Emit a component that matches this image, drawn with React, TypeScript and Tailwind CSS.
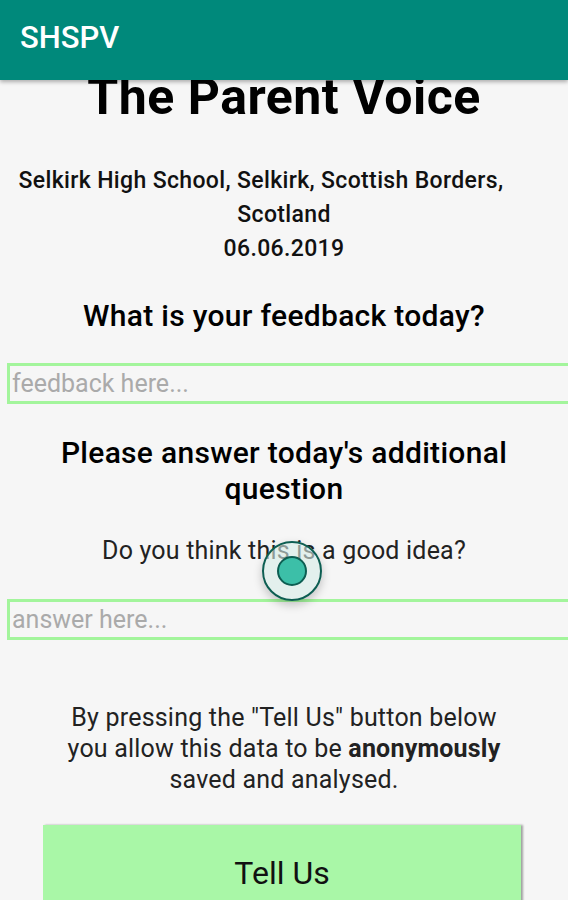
import React from "react";

export default function App() {
  return (
    <div
      className="relative w-[568px] h-[900px] overflow-hidden bg-[#f6f6f6]"
      style={{ fontFamily: "Roboto, 'Liberation Sans', sans-serif" }}
    >
      <div className="absolute left-0 top-0 z-10 flex h-[80px] w-full items-center bg-[#00897b] pb-[6px] pl-[20px] shadow-[0_2px_4px_rgba(0,0,0,0.3)]">
        <span className="text-[31px] font-medium leading-none text-white">SHSPV</span>
      </div>

      <div className="flex flex-col items-center pt-[67px]">
        <h1 className="text-[50px] font-bold leading-[60px] tracking-[0.5px] text-black">The Parent Voice</h1>
        <p className="mt-[37px] text-center text-[23px] font-medium leading-[34px] tracking-[0.35px] text-[#111]">
          <span className="inline-block pr-[46px]">Selkirk High School, Selkirk, Scottish Borders,</span>
          <br />
          Scotland
          <br />
          06.06.2019
        </p>
        <h2 className="mt-[30px] text-[30px] font-medium leading-[40px] tracking-[0.3px] text-black">
          What is your feedback today?
        </h2>
        <div className="mt-[27px] ml-[7px] flex h-[41px] w-[580px] items-center self-start border-[3px] border-[#a3f59c] pl-[2px] text-[25px] text-[#aaaaaa]">
          feedback here...
        </div>
        <h2 className="mt-[31px] text-center text-[30px] font-medium leading-[36px] tracking-[0.3px] text-black">
          Please answer today's additional
          <br />
          question
        </h2>
        <p className="mt-[27px] text-[25px] leading-[34px] tracking-[0.2px] text-[#222]">Do you think this is a good idea?</p>
        <div className="mt-[31px] ml-[7px] flex h-[41px] w-[580px] items-center self-start border-[3px] border-[#a3f59c] pl-[2px] text-[25px] text-[#aaaaaa]">
          answer here...
        </div>
        <p className="mt-[62px] text-center text-[25px] leading-[31px] tracking-[0.2px] text-[#222]">
          By pressing the "Tell Us" button below
          <br />
          you allow this data to be <span className="font-bold">anonymously</span>
          <br />
          saved and analysed.
        </p>
        <div className="mt-[30px] ml-[43px] flex h-[100px] w-[478px] items-start justify-center self-start bg-[#a9f7a7] pt-[28px] shadow-[2px_0_2px_rgba(0,0,0,0.35)]">
          <span className="text-[32px] leading-[40px] text-[#111]">Tell Us</span>
        </div>
      </div>

      <div className="absolute left-[262px] top-[541px] z-20 flex h-[60px] w-[60px] items-center justify-center rounded-full border-[2px] border-[#0d5e52] bg-[rgba(215,236,232,0.6)] shadow-[0_4px_10px_rgba(0,0,0,0.22)]">
        <div className="h-[30px] w-[30px] rounded-full border-[2px] border-[#0d5e52] bg-[#3cbfa8]" />
      </div>
    </div>
  );
}
